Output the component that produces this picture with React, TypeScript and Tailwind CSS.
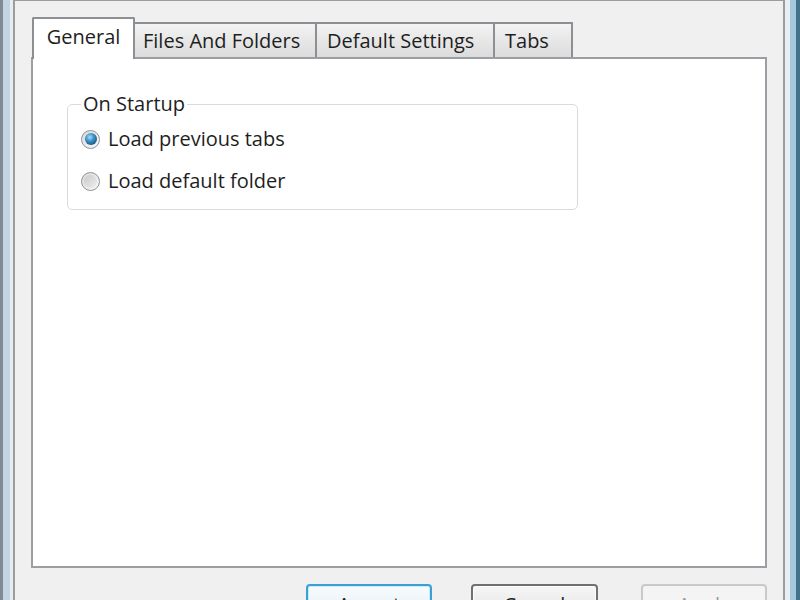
import React from "react";

const font = { fontFamily: '"Open Sans", "Noto Sans", sans-serif' };

function Radio({ checked }: { checked: boolean }) {
  return (
    <div className="w-[19px] h-[19px] rounded-full border border-[#8e9297] bg-[linear-gradient(135deg,#d8d8d8,#f9f9f9)] flex items-center justify-center shrink-0">
      {checked ? (
        <div className="w-[12px] h-[12px] rounded-full bg-[radial-gradient(circle_at_40%_35%,#a9dcf7_0%,#3a8fc4_40%,#104a78_85%)]" />
      ) : (
        <div className="w-[13px] h-[13px] rounded-full bg-[linear-gradient(135deg,#c9c9c9,#eeeeee)]" />
      )}
    </div>
  );
}

export default function App() {
  return (
    <div
      className="w-[800px] h-[600px] overflow-hidden flex text-[20px] text-[#1e1e1e]"
      style={font}
    >
      {/* left window frame */}
      <div className="w-[13px] h-full shrink-0 bg-[linear-gradient(to_right,#7f8a93_0_3px,#c3d4e2_3px_10px,#e6edf2_10px)]" />

      {/* dialog */}
      <div className="w-[772px] h-full shrink-0 overflow-hidden border-l-2 border-r-2 border-t border-[#9a9c9e] bg-[#f0f0f0] flex flex-col">
        {/* tab strip */}
        <div className="flex items-end h-[56px] shrink-0 pl-[17px] leading-[28px]">
          <div className="relative z-10 w-[103px] h-[42px] -mb-[2px] bg-white border-l-2 border-t-2 border-r-2 border-[#8c8f93] rounded-t-[2px] pt-[4px] text-center">
            General
          </div>
          <div className="w-[182px] h-[35px] border-t-2 border-r-2 border-[#8c8f93] bg-[linear-gradient(to_bottom,#f3f3f3,#e6e6e6_55%,#dcdcdc)] pl-[8px] pt-[3px] whitespace-nowrap">
            Files And Folders
          </div>
          <div className="w-[178px] h-[35px] border-t-2 border-r-2 border-[#8c8f93] bg-[linear-gradient(to_bottom,#f3f3f3,#e6e6e6_55%,#dcdcdc)] pl-[10px] pt-[3px] whitespace-nowrap">
            Default Settings
          </div>
          <div className="w-[78px] h-[35px] border-t-2 border-r-2 border-[#8c8f93] bg-[linear-gradient(to_bottom,#f3f3f3,#e6e6e6_55%,#dcdcdc)] pl-[10px] pt-[3px] whitespace-nowrap">
            Tabs
          </div>
        </div>

        {/* panel */}
        <div className="ml-[16px] w-[736px] h-[511px] shrink-0 border-2 border-[#9b9ea2] bg-white">
          <fieldset className="ml-[34px] mt-[32px] w-[511px] border border-[#d5dde3] rounded-[5px] pl-[13px] pb-[8px]">
            <legend className="px-[2px] leading-[26px]">On Startup</legend>
            <div className="flex items-center h-[42px] gap-[8px] pt-[2px]">
              <Radio checked />
              <span>Load previous tabs</span>
            </div>
            <div className="flex items-center h-[42px] gap-[8px] pt-[2px]">
              <Radio checked={false} />
              <span>Load default folder</span>
            </div>
          </fieldset>
        </div>

        {/* buttons */}
        <div className="flex shrink-0 mt-[16px] leading-[28px]">
          <div className="ml-[291px] w-[126px] h-[34px] shrink-0 rounded-[4px] border-2 border-[#3c9fd2] bg-[linear-gradient(to_bottom,#f7fbfd,#e4eef4)] shadow-[inset_0_0_0_1px_#c4ecfb] pt-[5px] text-center">
            Accept
          </div>
          <div className="ml-[39px] w-[127px] h-[34px] shrink-0 rounded-[4px] border-2 border-[#707070] bg-[linear-gradient(to_bottom,#f6f6f6,#e4e4e4)] shadow-[inset_0_0_0_1px_#fcfcfc] pt-[5px] text-center">
            Cancel
          </div>
          <div className="ml-[43px] w-[126px] h-[34px] shrink-0 rounded-[4px] border-2 border-[#c9c9c9] bg-[#f4f4f4] pt-[5px] text-center text-[#9a9a9a]">
            Apply
          </div>
        </div>
      </div>

      {/* right window frame */}
      <div className="flex-1 h-full bg-[linear-gradient(to_right,#e9eef2_0_5px,#a5c6dd_5px_11px,#44708a_11px)]" />
    </div>
  );
}
